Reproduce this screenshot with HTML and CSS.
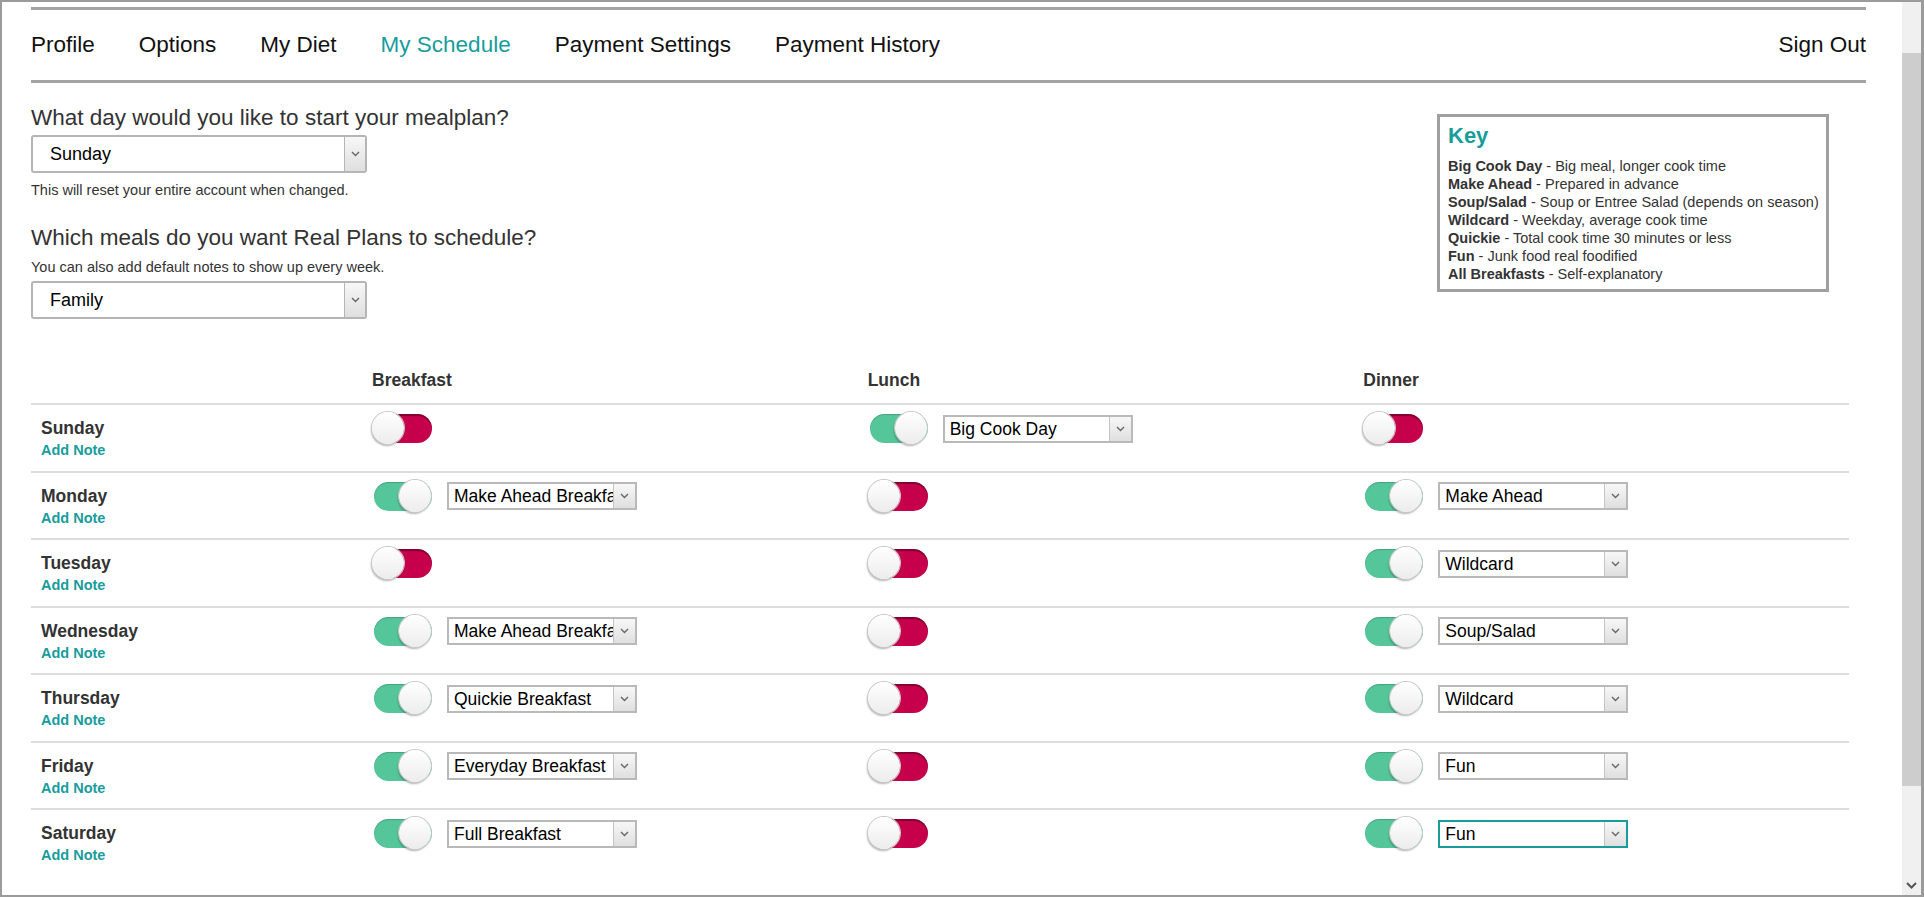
FILE: index.html
```html
<!DOCTYPE html>
<html lang="en">
<head>
<meta charset="utf-8">
<title>My Schedule</title>
<link rel="stylesheet" href="styles.css">
</head>
<body>
<div class="frame">
  <div class="page">
    <ul class="nav">
      <li>Profile</li>
      <li>Options</li>
      <li>My Diet</li>
      <li class="active">My Schedule</li>
      <li>Payment Settings</li>
      <li>Payment History</li>
      <li class="signout">Sign Out</li>
    </ul>

    <div class="top">
      <div class="settings">
        <h2 class="q">What day would you like to start your mealplan?</h2>
        <div class="bigsel"><span class="val">Sunday</span><span class="arrow"><svg width="9" height="6" viewBox="0 0 9 6"><polyline points="1,1 4.5,4.5 8,1" fill="none" stroke="#666" stroke-width="1.4"/></svg></span></div>
        <p class="hint first">This will reset your entire account when changed.</p>
        <h2 class="q second">Which meals do you want Real Plans to schedule?</h2>
        <p class="hint sub">You can also add default notes to show up every week.</p>
        <div class="bigsel fam"><span class="val">Family</span><span class="arrow"><svg width="9" height="6" viewBox="0 0 9 6"><polyline points="1,1 4.5,4.5 8,1" fill="none" stroke="#666" stroke-width="1.4"/></svg></span></div>
      </div>
      <div class="key">
        <div class="key-title">Key</div>
        <div class="key-line"><b>Big Cook Day</b> - Big meal, longer cook time</div>
        <div class="key-line"><b>Make Ahead</b> - Prepared in advance</div>
        <div class="key-line"><b>Soup/Salad</b> - Soup or Entree Salad (depends on season)</div>
        <div class="key-line"><b>Wildcard</b> - Weekday, average cook time</div>
        <div class="key-line"><b>Quickie</b> - Total cook time 30 minutes or less</div>
        <div class="key-line"><b>Fun</b> - Junk food real foodified</div>
        <div class="key-line"><b>All Breakfasts</b> - Self-explanatory</div>
      </div>
    </div>

    <div class="sched">
      <div class="row head">
        <div></div>
        <div>Breakfast</div>
        <div>Lunch</div>
        <div>Dinner</div>
      </div>

      <div class="row day-row">
        <div class="day"><div class="name">Sunday</div><div class="note">Add Note</div></div>
        <div class="cell"><span class="tog"><span class="track"></span><span class="knob"></span></span></div>
        <div class="cell"><span class="tog on"><span class="track"></span><span class="knob"></span></span><div class="sel"><span class="val">Big Cook Day</span><span class="arrow"><svg width="9" height="6" viewBox="0 0 9 6"><polyline points="1,1 4.5,4.5 8,1" fill="none" stroke="#666" stroke-width="1.4"/></svg></span></div></div>
        <div class="cell"><span class="tog"><span class="track"></span><span class="knob"></span></span></div>
      </div>

      <div class="row day-row">
        <div class="day"><div class="name">Monday</div><div class="note">Add Note</div></div>
        <div class="cell"><span class="tog on"><span class="track"></span><span class="knob"></span></span><div class="sel"><span class="val">Make Ahead Breakfast</span><span class="arrow"><svg width="9" height="6" viewBox="0 0 9 6"><polyline points="1,1 4.5,4.5 8,1" fill="none" stroke="#666" stroke-width="1.4"/></svg></span></div></div>
        <div class="cell"><span class="tog"><span class="track"></span><span class="knob"></span></span></div>
        <div class="cell"><span class="tog on"><span class="track"></span><span class="knob"></span></span><div class="sel"><span class="val">Make Ahead</span><span class="arrow"><svg width="9" height="6" viewBox="0 0 9 6"><polyline points="1,1 4.5,4.5 8,1" fill="none" stroke="#666" stroke-width="1.4"/></svg></span></div></div>
      </div>

      <div class="row day-row">
        <div class="day"><div class="name">Tuesday</div><div class="note">Add Note</div></div>
        <div class="cell"><span class="tog"><span class="track"></span><span class="knob"></span></span></div>
        <div class="cell"><span class="tog"><span class="track"></span><span class="knob"></span></span></div>
        <div class="cell"><span class="tog on"><span class="track"></span><span class="knob"></span></span><div class="sel"><span class="val">Wildcard</span><span class="arrow"><svg width="9" height="6" viewBox="0 0 9 6"><polyline points="1,1 4.5,4.5 8,1" fill="none" stroke="#666" stroke-width="1.4"/></svg></span></div></div>
      </div>

      <div class="row day-row">
        <div class="day"><div class="name">Wednesday</div><div class="note">Add Note</div></div>
        <div class="cell"><span class="tog on"><span class="track"></span><span class="knob"></span></span><div class="sel"><span class="val">Make Ahead Breakfast</span><span class="arrow"><svg width="9" height="6" viewBox="0 0 9 6"><polyline points="1,1 4.5,4.5 8,1" fill="none" stroke="#666" stroke-width="1.4"/></svg></span></div></div>
        <div class="cell"><span class="tog"><span class="track"></span><span class="knob"></span></span></div>
        <div class="cell"><span class="tog on"><span class="track"></span><span class="knob"></span></span><div class="sel"><span class="val">Soup/Salad</span><span class="arrow"><svg width="9" height="6" viewBox="0 0 9 6"><polyline points="1,1 4.5,4.5 8,1" fill="none" stroke="#666" stroke-width="1.4"/></svg></span></div></div>
      </div>

      <div class="row day-row">
        <div class="day"><div class="name">Thursday</div><div class="note">Add Note</div></div>
        <div class="cell"><span class="tog on"><span class="track"></span><span class="knob"></span></span><div class="sel"><span class="val">Quickie Breakfast</span><span class="arrow"><svg width="9" height="6" viewBox="0 0 9 6"><polyline points="1,1 4.5,4.5 8,1" fill="none" stroke="#666" stroke-width="1.4"/></svg></span></div></div>
        <div class="cell"><span class="tog"><span class="track"></span><span class="knob"></span></span></div>
        <div class="cell"><span class="tog on"><span class="track"></span><span class="knob"></span></span><div class="sel"><span class="val">Wildcard</span><span class="arrow"><svg width="9" height="6" viewBox="0 0 9 6"><polyline points="1,1 4.5,4.5 8,1" fill="none" stroke="#666" stroke-width="1.4"/></svg></span></div></div>
      </div>

      <div class="row day-row">
        <div class="day"><div class="name">Friday</div><div class="note">Add Note</div></div>
        <div class="cell"><span class="tog on"><span class="track"></span><span class="knob"></span></span><div class="sel"><span class="val">Everyday Breakfast</span><span class="arrow"><svg width="9" height="6" viewBox="0 0 9 6"><polyline points="1,1 4.5,4.5 8,1" fill="none" stroke="#666" stroke-width="1.4"/></svg></span></div></div>
        <div class="cell"><span class="tog"><span class="track"></span><span class="knob"></span></span></div>
        <div class="cell"><span class="tog on"><span class="track"></span><span class="knob"></span></span><div class="sel"><span class="val">Fun</span><span class="arrow"><svg width="9" height="6" viewBox="0 0 9 6"><polyline points="1,1 4.5,4.5 8,1" fill="none" stroke="#666" stroke-width="1.4"/></svg></span></div></div>
      </div>

      <div class="row day-row last">
        <div class="day"><div class="name">Saturday</div><div class="note">Add Note</div></div>
        <div class="cell"><span class="tog on"><span class="track"></span><span class="knob"></span></span><div class="sel"><span class="val">Full Breakfast</span><span class="arrow"><svg width="9" height="6" viewBox="0 0 9 6"><polyline points="1,1 4.5,4.5 8,1" fill="none" stroke="#666" stroke-width="1.4"/></svg></span></div></div>
        <div class="cell"><span class="tog"><span class="track"></span><span class="knob"></span></span></div>
        <div class="cell"><span class="tog on"><span class="track"></span><span class="knob"></span></span><div class="sel focus"><span class="val">Fun</span><span class="arrow"><svg width="9" height="6" viewBox="0 0 9 6"><polyline points="1,1 4.5,4.5 8,1" fill="none" stroke="#666" stroke-width="1.4"/></svg></span></div></div>
      </div>
    </div>
  </div>

  <div class="scrollbar">
    <div class="sb-top"></div>
    <div class="sb-thumb"></div>
    <div class="sb-rest"><svg width="11" height="7" viewBox="0 0 11 7"><polyline points="1,1 5.5,5.5 10,1" fill="none" stroke="#555" stroke-width="2"/></svg></div>
  </div>
</div>
</body>
</html>
```

FILE: styles.css
```css
* { box-sizing: border-box; }
html, body { margin: 0; padding: 0; }
body {
  font-family: "Liberation Sans", Arial, Helvetica, sans-serif;
  color: #333;
  background: #fff;
  overflow: hidden;
}

.frame {
  width: 1924px;
  height: 897px;
  border: 2px solid #9b9b9b;
  border-right-width: 3px;
  display: flex;
}

.page {
  flex: 1;
  overflow: hidden;
  padding: 5px 36px 0 29px;
}

/* scrollbar */
.scrollbar {
  width: 19px;
  background: #f0f0f0;
  display: flex;
  flex-direction: column;
}
.sb-top { height: 51px; }
.sb-thumb { height: 733px; background: #cdcdcd; }
.sb-rest {
  flex: 1;
  display: flex;
  align-items: flex-end;
  justify-content: center;
  padding-bottom: 6px;
}

/* nav */
.nav {
  list-style: none;
  margin: 0;
  padding: 0;
  height: 76px;
  border-top: 3px solid #a3a3a3;
  border-bottom: 3px solid #a3a3a3;
  display: flex;
  align-items: center;
  gap: 44px;
  font-size: 22.5px;
  line-height: 26px;
  color: #111;
}
.nav .active { color: #189c9c; }
.nav .signout { margin-left: auto; }

/* top section */
.top {
  display: flex;
  justify-content: space-between;
  align-items: flex-start;
  margin-top: 22px;
}
.q {
  margin: 0;
  font-size: 22.5px;
  line-height: 26px;
  font-weight: normal;
  color: #333;
}
.q.second { margin-top: 26px; }

.hint {
  margin: 0;
  font-size: 14.5px;
  line-height: 17px;
  color: #333;
}
.hint.first { margin-top: 8.5px; }
.hint.sub { margin-top: 8px; }

.bigsel {
  margin-top: 4px;
  width: 336px;
  height: 38px;
  border: 2px solid #b5b5b5;
  border-radius: 3px;
  display: flex;
  font-size: 18px;
  line-height: 34px;
  color: #000;
  background: #fff;
  overflow: hidden;
}
.bigsel.fam { margin-top: 5.5px; }
.bigsel .val { flex: 1; padding-left: 17px; }

.arrow {
  width: 21px;
  flex: none;
  border-left: 1px solid #b5b5b5;
  background: linear-gradient(#f7f7f7, #dfdfdf);
  display: flex;
  align-items: center;
  justify-content: center;
}

/* key */
.key {
  margin-top: 9px;
  margin-right: 37px;
  width: 392px;
  border: 3px solid #a0a0a0;
  padding: 6px 6px 6px 8px;
}
.key-title {
  font-size: 22px;
  line-height: 26px;
  font-weight: bold;
  color: #189c9c;
  margin-bottom: 8px;
}
.key-line {
  font-size: 14.5px;
  line-height: 18px;
  color: #333;
  white-space: nowrap;
}

/* schedule table */
.sched {
  margin-top: 51px;
  width: 1818px;
}
.row {
  display: grid;
  grid-template-columns: 331px repeat(3, 1fr);
}
.head {
  border-bottom: 2px solid #dddddd;
  padding-bottom: 13px;
  font-weight: bold;
  font-size: 17.5px;
  line-height: 20px;
  color: #333;
}
.head > div { padding-left: 10px; }

.day-row {
  height: 67.5px;
  border-bottom: 2px solid #dddddd;
}
.day-row.last { border-bottom: none; }

.day { padding: 13px 0 0 10px; }
.day .name {
  font-weight: bold;
  font-size: 17.5px;
  line-height: 20px;
  color: #333;
}
.day .note {
  margin-top: 3px;
  font-weight: bold;
  font-size: 14.5px;
  line-height: 18px;
  color: #189c9c;
}

.cell {
  align-self: start;
  display: flex;
  align-items: center;
  gap: 15px;
  padding: 7px 0 0 10px;
}

/* toggle */
.tog {
  position: relative;
  display: block;
  width: 60px;
  height: 33px;
  flex: none;
}
.tog .track {
  position: absolute;
  left: 2px;
  top: 2px;
  width: 58px;
  height: 29px;
  border-radius: 15px;
  background: #c6004b;
  box-shadow: inset 0 2px 1px rgba(0, 0, 0, 0.35);
}
.tog.on .track {
  background: #55c699;
  box-shadow: inset 0 1px 1px rgba(0, 0, 0, 0.18);
}
.tog .knob {
  position: absolute;
  left: 0;
  top: 0;
  width: 32px;
  height: 32px;
  border-radius: 50%;
  background: linear-gradient(#ffffff, #ececec);
  box-shadow: 0 0 0 1px #c9c9c9, -1px 2px 2px rgba(0, 0, 0, 0.3);
}
.tog.on .knob { left: 27px; }

/* small select */
.sel {
  width: 190px;
  height: 28px;
  flex: none;
  border: 2px solid #b9b9b9;
  display: flex;
  font-size: 17.5px;
  line-height: 24px;
  color: #000;
  background: #fff;
}
.sel .val {
  flex: 1;
  padding-left: 5px;
  overflow: hidden;
  white-space: nowrap;
}
.sel .arrow {
  width: 22px;
  border-left: 1px solid #c4c4c4;
}
.sel.focus { border-color: #189c9c; }
```
